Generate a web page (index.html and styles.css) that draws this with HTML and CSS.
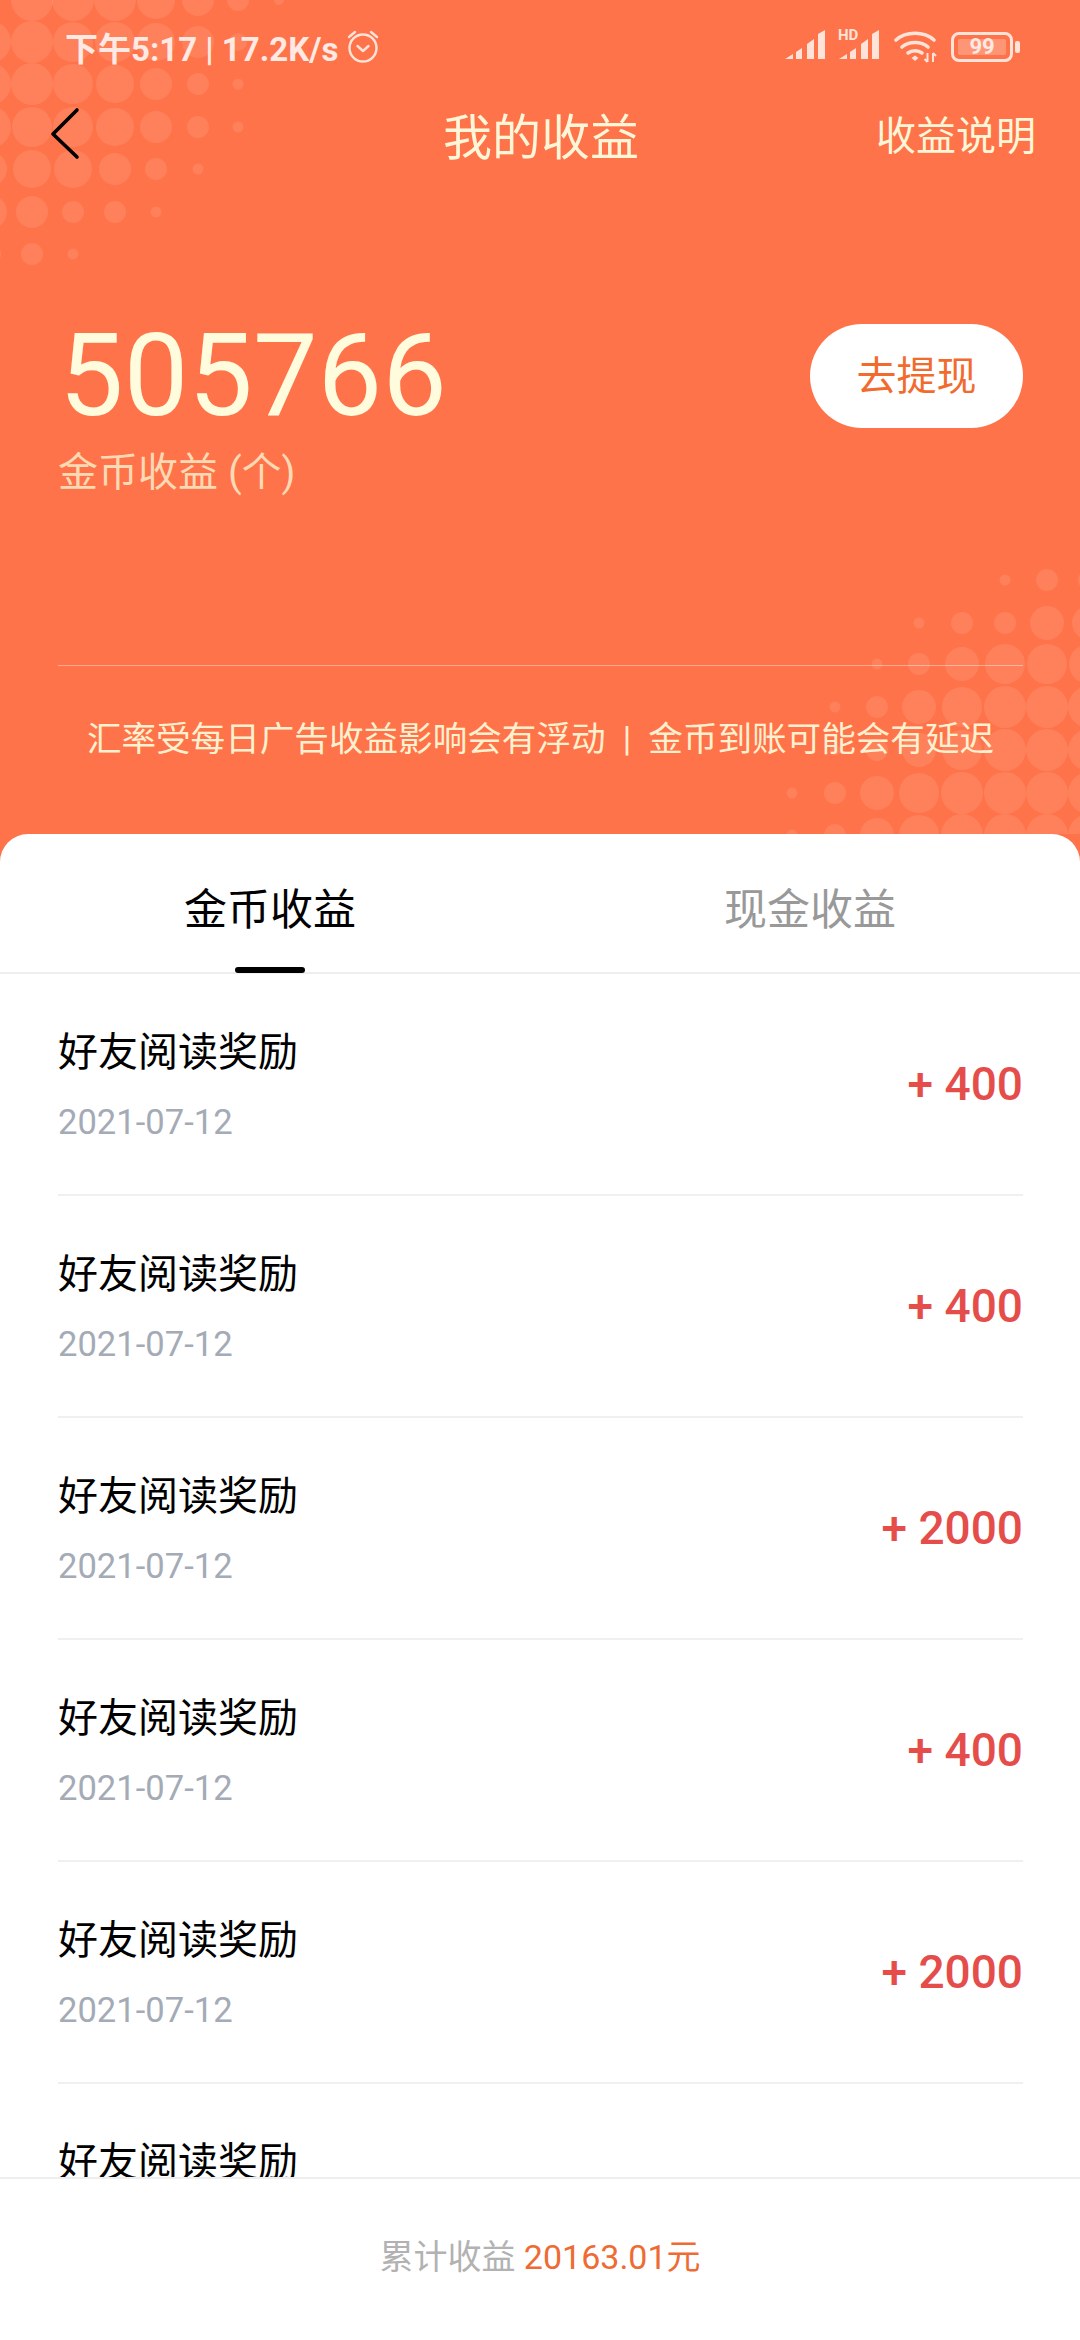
FILE: index.html
```html
<!DOCTYPE html>
<html>
	<head>
		<meta charset="UTF-8"/>
		<title>我的收益</title>
		<link rel="stylesheet" href="styles.css">
	</head>
	<body>
		<div class="page">
			<div class="header">
				<svg class="dots" width="1080" height="834" viewBox="0 0 1080 834">
					<g fill="#fff" fill-opacity="0.1">
						<circle cx="32" cy="0" r="21"/><circle cx="73" cy="0" r="21"/><circle cx="115" cy="0" r="21"/><circle cx="156" cy="0" r="19"/><circle cx="198" cy="0" r="16"/><circle cx="238" cy="0" r="11"/><circle cx="279" cy="0" r="5"/>
						<circle cx="-10" cy="42" r="21"/><circle cx="32" cy="42" r="21"/><circle cx="73" cy="42" r="20"/><circle cx="115" cy="42" r="20"/><circle cx="156" cy="42" r="19"/><circle cx="198" cy="42" r="16"/><circle cx="238" cy="42" r="9"/>
						<circle cx="-10" cy="84" r="21"/><circle cx="32" cy="84" r="21"/><circle cx="73" cy="84" r="20"/><circle cx="115" cy="84" r="19"/><circle cx="156" cy="84" r="16"/><circle cx="198" cy="84" r="11"/><circle cx="238" cy="84" r="5.5"/>
						<circle cx="-10" cy="127" r="21"/><circle cx="32" cy="127" r="20"/><circle cx="73" cy="127" r="20"/><circle cx="115" cy="127" r="19"/><circle cx="156" cy="127" r="16"/><circle cx="198" cy="127" r="11"/><circle cx="238" cy="127" r="5.5"/>
						<circle cx="-10" cy="169" r="17"/><circle cx="32" cy="169" r="19"/><circle cx="73" cy="169" r="19"/><circle cx="115" cy="169" r="16"/><circle cx="156" cy="169" r="11"/><circle cx="198" cy="169" r="5.5"/>
						<circle cx="-10" cy="212" r="17"/><circle cx="32" cy="212" r="16"/><circle cx="73" cy="212" r="11"/><circle cx="115" cy="212" r="11"/><circle cx="156" cy="212" r="5.5"/>
						<circle cx="-10" cy="254" r="11"/><circle cx="32" cy="254" r="11"/><circle cx="73" cy="254" r="5.5"/>

						<circle cx="1005" cy="580" r="5.5"/><circle cx="1047" cy="580" r="11"/><circle cx="1089" cy="580" r="11"/>
						<circle cx="919" cy="623" r="5.5"/><circle cx="962" cy="623" r="11"/><circle cx="1005" cy="623" r="11"/><circle cx="1047" cy="623" r="17"/><circle cx="1089" cy="623" r="17"/>
						<circle cx="877" cy="664" r="5.5"/><circle cx="919" cy="664" r="11"/><circle cx="962" cy="664" r="17"/><circle cx="1005" cy="664" r="20"/><circle cx="1047" cy="664" r="20"/><circle cx="1089" cy="664" r="20"/>
						<circle cx="835" cy="707" r="5.5"/><circle cx="877" cy="707" r="11"/><circle cx="919" cy="707" r="17"/><circle cx="962" cy="707" r="20"/><circle cx="1005" cy="707" r="21"/><circle cx="1047" cy="707" r="21"/><circle cx="1089" cy="707" r="21"/>
						<circle cx="835" cy="750" r="5.5"/><circle cx="877" cy="750" r="11"/><circle cx="919" cy="750" r="17"/><circle cx="962" cy="750" r="20"/><circle cx="1005" cy="750" r="21"/><circle cx="1047" cy="750" r="21"/><circle cx="1089" cy="750" r="21"/>
						<circle cx="792" cy="793" r="5.5"/><circle cx="835" cy="793" r="11"/><circle cx="877" cy="793" r="17"/><circle cx="919" cy="793" r="20"/><circle cx="962" cy="793" r="21"/><circle cx="1005" cy="793" r="21"/><circle cx="1047" cy="793" r="21"/><circle cx="1089" cy="793" r="21"/>
						<circle cx="792" cy="835" r="5.5"/><circle cx="835" cy="835" r="11"/><circle cx="877" cy="835" r="17"/><circle cx="919" cy="835" r="20"/><circle cx="962" cy="835" r="21"/><circle cx="1005" cy="835" r="21"/><circle cx="1047" cy="835" r="21"/><circle cx="1089" cy="835" r="21"/>
					</g>
				</svg>

				<div class="statusBar">
					<div class="statusLeft">
						<span>下午5:17 | 17.2K/s</span>
						<svg class="alarm" width="32" height="34" viewBox="0 0 32 34" fill="none" stroke="#ffe2d8" stroke-width="2.4" stroke-linecap="round" stroke-linejoin="round">
							<circle cx="16" cy="19" r="13.5"/>
							<path d="M2 8 L8 3"/>
							<path d="M30 8 L24 3"/>
							<path d="M10.5 17 L16 22 L21.5 17"/>
						</svg>
					</div>
					<div class="statusRight">
						<svg class="signal" width="96" height="40" viewBox="0 -6 96 40" fill="#ffe2d8">
							<path d="M0 30 L8 25 V30 Z"/>
							<path d="M11 23 L17 19 V30 H11 Z"/>
							<path d="M22 15 L29 10 V30 H22 Z"/>
							<path d="M33 5 L40 1 V30 H33 Z"/>
							<path d="M54 30 L62 25 V30 Z"/>
							<path d="M65 23 L71 19 V30 H65 Z"/>
							<path d="M76 15 L83 10 V30 H76 Z"/>
							<path d="M87 5 L94 1 V30 H87 Z"/>
							<text x="53" y="11" class="hdText">HD</text>
						</svg>
						<svg class="wifi" width="44" height="32" viewBox="0 0 44 32" fill="none" stroke="#ffe2d8" stroke-width="3.6" stroke-linecap="round">
							<path d="M2 9 C12 0 30 0 40 9"/>
							<path d="M8 16 C15 10 27 10 34 16"/>
							<path d="M14 22 C18 19 24 19 28 22"/>
							<path d="M17.5 27 L21 24.5 L24.5 27 L21 30 Z" fill="#ffe2d8" stroke="none"/>
							<path d="M33.5 22 V31 M30.5 28 L33.5 31 M39 31 V22 M39 22 L42 25" stroke-width="2" stroke-linecap="butt"/>
						</svg>
						<div class="battery">
							<div class="batteryBody"><div class="batteryFill">99</div></div>
							<div class="batteryTip"></div>
						</div>
					</div>
				</div>

				<div class="navBar">
					<svg class="back" width="34" height="56" viewBox="0 0 34 56" fill="none" stroke="#000" stroke-width="3.6" stroke-linecap="round" stroke-linejoin="round">
						<path d="M27 4 L3 28 L27 51"/>
					</svg>
					<div class="navTitle">我的收益</div>
					<div class="navLink">收益说明</div>
				</div>

				<div class="summary">
					<div>
						<div class="coinTotal">505766</div>
						<div class="coinLabel">金币收益 (个)</div>
					</div>
					<button type="button" class="withdraw">去提现</button>
				</div>

				<div class="notice">汇率受每日广告收益影响会有浮动&nbsp; | &nbsp;金币到账可能会有延迟</div>
			</div>

			<div class="sheet">
				<div class="tabs">
					<div class="tab tabActive">金币收益</div>
					<div class="tab">现金收益</div>
				</div>
				<div class="list">
					<div class="item">
						<div><div class="itemTitle">好友阅读奖励</div><div class="itemDate">2021-07-12</div></div>
						<div class="itemAmount">+ 400</div>
					</div>
					<div class="item">
						<div><div class="itemTitle">好友阅读奖励</div><div class="itemDate">2021-07-12</div></div>
						<div class="itemAmount">+ 400</div>
					</div>
					<div class="item">
						<div><div class="itemTitle">好友阅读奖励</div><div class="itemDate">2021-07-12</div></div>
						<div class="itemAmount">+ 2000</div>
					</div>
					<div class="item">
						<div><div class="itemTitle">好友阅读奖励</div><div class="itemDate">2021-07-12</div></div>
						<div class="itemAmount">+ 400</div>
					</div>
					<div class="item">
						<div><div class="itemTitle">好友阅读奖励</div><div class="itemDate">2021-07-12</div></div>
						<div class="itemAmount">+ 2000</div>
					</div>
					<div class="item">
						<div><div class="itemTitle">好友阅读奖励</div><div class="itemDate">2021-07-12</div></div>
						<div class="itemAmount">+ 400</div>
					</div>
				</div>
				<div class="footer">累计收益 <span class="footerSum">20163.01元</span></div>
			</div>
		</div>
	</body>
</html>
```
FILE: styles.css
```css
*{
	box-sizing:border-box;
}
body{
	margin:0;
	font-family:Roboto,"Noto Sans CJK SC",sans-serif;
	background:#fff;
}
.page{
	width:1080px;
	height:2340px;
	overflow:hidden;
	display:flex;
	flex-direction:column;
	background:#fe7349;
}
.header{
	position:relative;
	height:834px;
	flex:none;
	padding:0 57px 0 58px;
}
.dots{
	position:absolute;
	left:0;
	top:0;
}
.statusBar{
	position:relative;
	height:94px;
	margin:0 3px 0 7px;
	display:flex;
	justify-content:space-between;
	align-items:center;
	color:#ffe9e2;
	font-size:33px;
	font-weight:700;
}
.statusLeft{
	display:flex;
	align-items:center;
	gap:9px;
}
.alarm{
	margin-top:-2px;
}
.statusRight{
	display:flex;
	align-items:center;
	gap:13px;
}
.signal{
	margin-top:-8px;
}
.hdText{
	font-size:15px;
	font-weight:700;
}
.battery{
	display:flex;
	align-items:center;
	gap:2px;
}
.batteryBody{
	width:62px;
	height:30px;
	padding:4px;
	border:3px solid #ffe2d8;
	border-radius:8px;
}
.batteryFill{
	height:100%;
	background:rgba(255,255,255,0.25);
	border-radius:2px;
	color:#ffe9e2;
	font-size:22px;
	font-weight:700;
	line-height:16px;
	text-align:center;
}
.batteryTip{
	width:5px;
	height:12px;
	background:#ffe2d8;
	border-radius:2px;
}
.navBar{
	position:relative;
	height:84px;
	margin-top:-3px;
	display:flex;
	justify-content:space-between;
	align-items:center;
	color:#fff6d8;
}
.back{
	margin:2px 0 0 -8px;
}
.navTitle{
	font-size:49px;
	margin-left:122px;
}
.navLink{
	font-size:40px;
	margin-right:-13px;
}
.summary{
	position:relative;
	display:flex;
	justify-content:space-between;
	margin-top:123px;
}
.coinTotal{
	color:#fffbdd;
	font-size:115px;
	line-height:136px;
	margin:10px 0 0 1px;
}
.coinLabel{
	color:#ffd9b4;
	font-size:40px;
	line-height:46px;
	margin-top:6px;
}
.withdraw{
	width:213px;
	height:104px;
	margin-top:26px;
	padding:0 0 6px;
	border:none;
	border-radius:52px;
	background:#fff;
	color:#f26b2e;
	font-family:inherit;
	font-size:40px;
}
.notice{
	position:relative;
	margin-top:169px;
	padding-top:49px;
	border-top:1px solid rgba(255,255,255,0.4);
	color:#fff0cf;
	font-size:34.6px;
	line-height:48px;
	text-align:center;
}
.sheet{
	flex:1;
	position:relative;
	min-height:0;
	display:flex;
	flex-direction:column;
	background:#fff;
	border-radius:28px 28px 0 0;
}
.tabs{
	display:flex;
	height:140px;
	flex:none;
	border-bottom:2px solid #eeeeee;
}
.tab{
	position:relative;
	flex:1;
	padding-top:47px;
	color:#999;
	font-size:43px;
	line-height:58px;
	text-align:center;
}
.tabActive{
	color:#000;
}
.tabActive:after{
	content:"";
	position:absolute;
	left:235px;
	bottom:-1px;
	width:70px;
	height:6px;
	background:#000;
	border-radius:3px;
}
.list{
	flex:1;
	min-height:0;
	overflow:hidden;
	padding:0 57px 0 58px;
}
.item{
	height:222px;
	display:flex;
	justify-content:space-between;
	align-items:center;
	border-bottom:2px solid #f0f0f0;
}
.itemTitle{
	color:#000;
	font-size:40px;
	line-height:54px;
}
.itemDate{
	margin-top:21px;
	color:#a4abb6;
	font-size:34.6px;
	line-height:42px;
}
.itemAmount{
	color:#e54d4b;
	font-size:46px;
	font-weight:500;
}
.footer{
	flex:none;
	height:163px;
	border-top:2px solid #eeeeee;
	background:#fff;
	color:#b2b2b2;
	font-size:34px;
	line-height:156px;
	text-align:center;
}
.footerSum{
	color:#ee6c33;
}
```
